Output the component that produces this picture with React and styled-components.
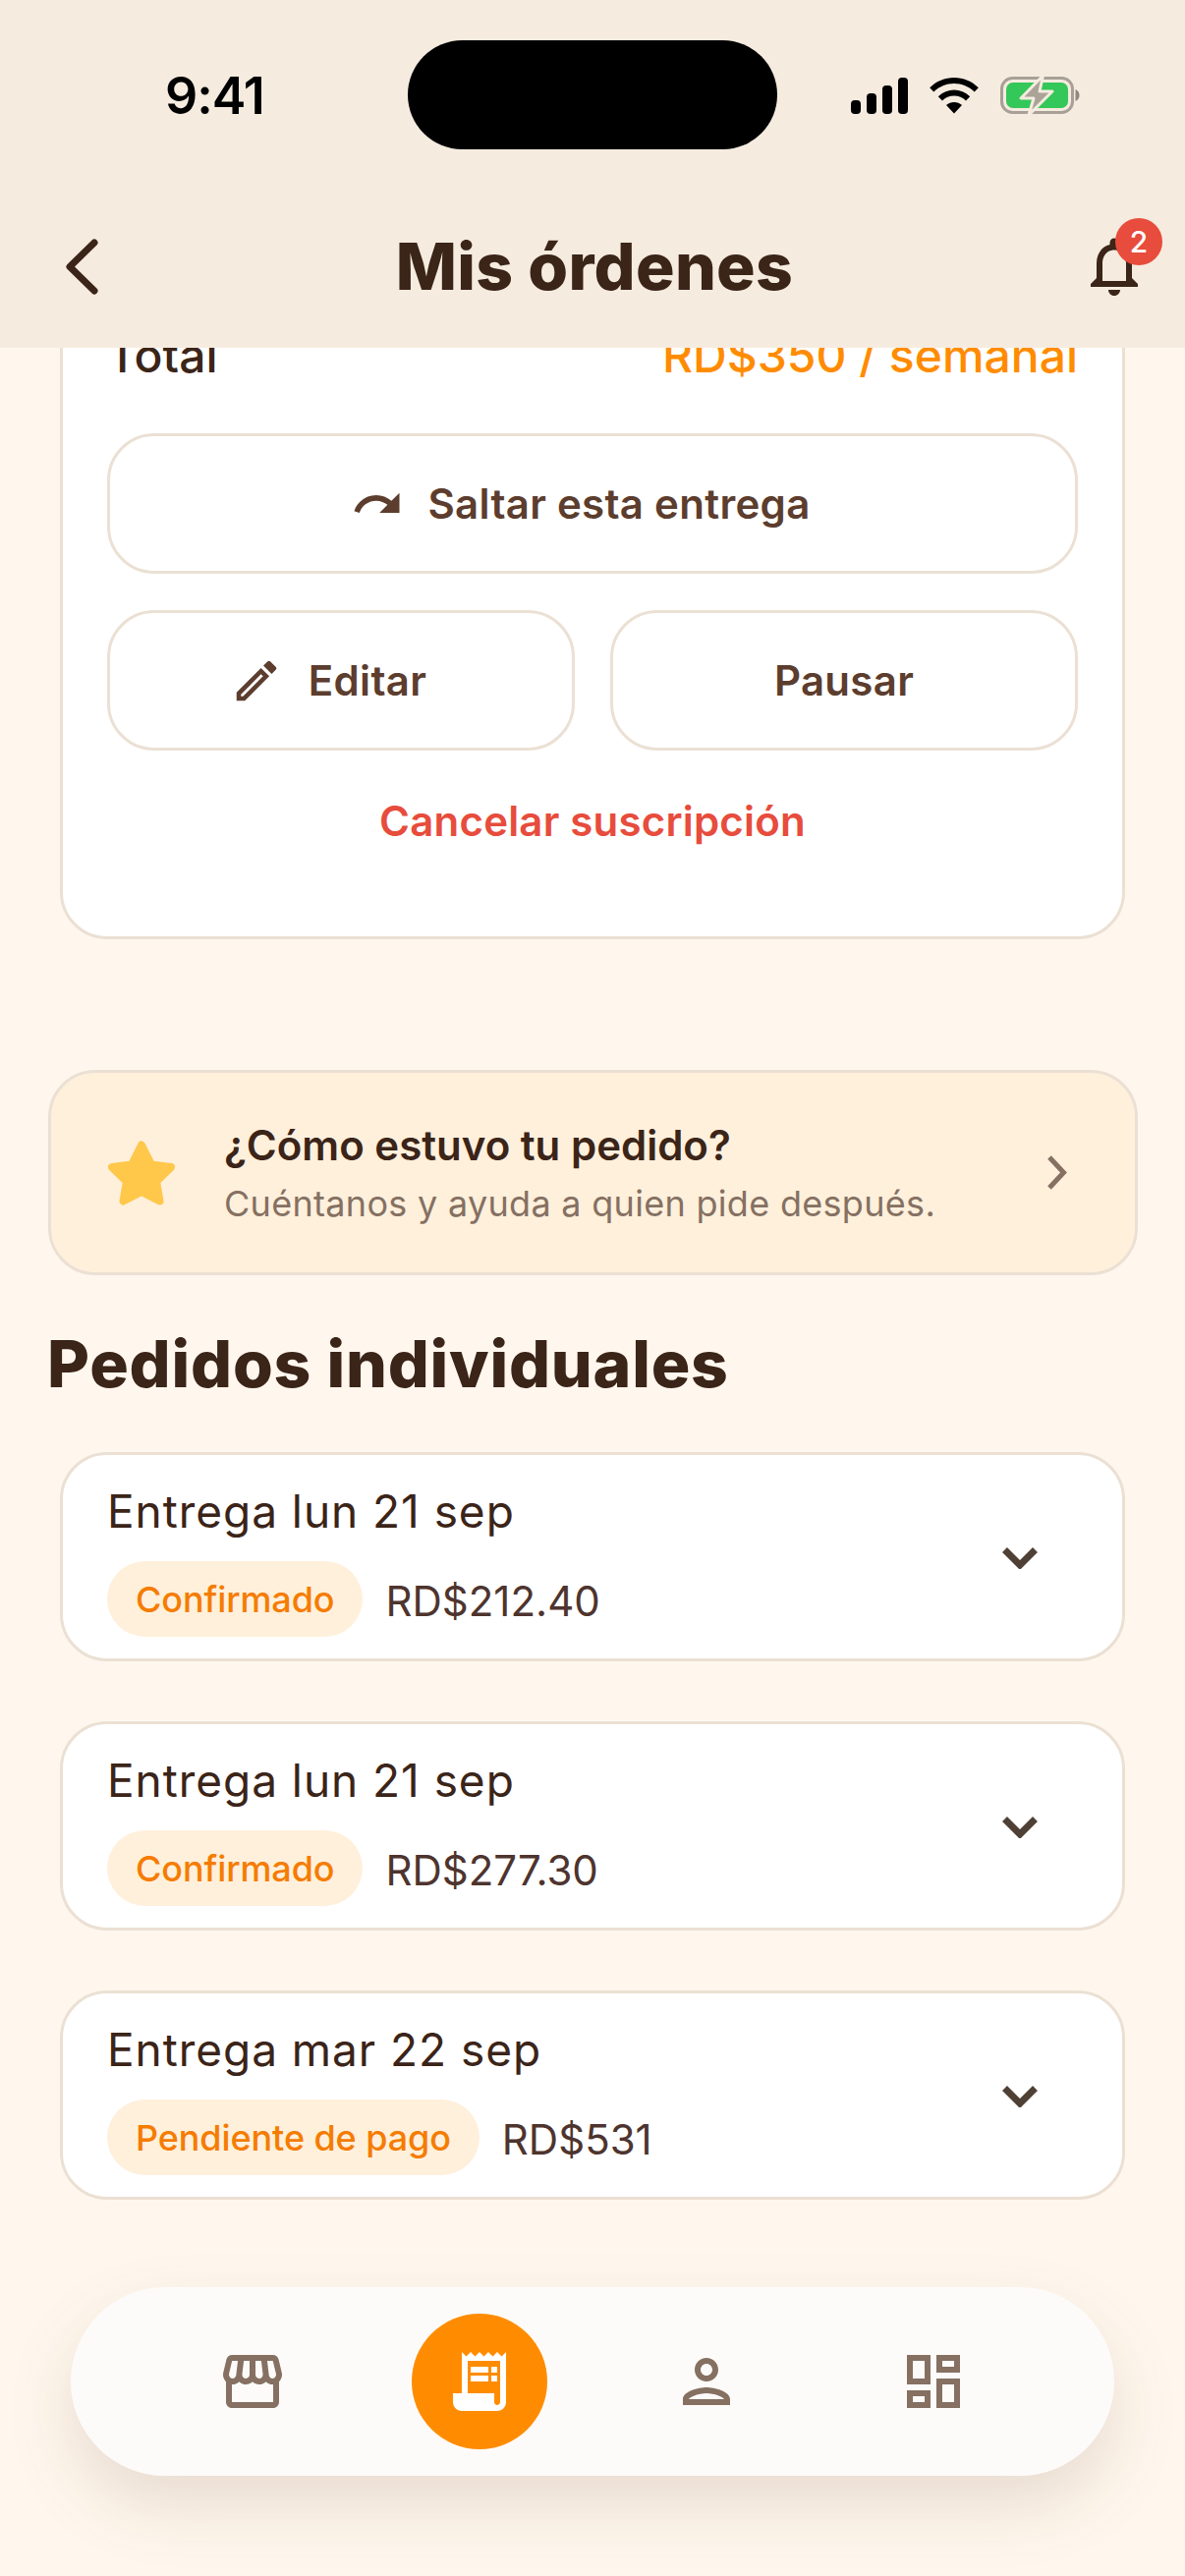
import React from "react";
import styled, { createGlobalStyle } from "styled-components";
import {
  MdOutlineStorefront,
  MdReceiptLong,
  MdOutlinePerson,
  MdOutlineDashboard,
  MdRedo,
  MdOutlineEdit,
  MdOutlineNotifications,
} from "react-icons/md";

const GlobalStyle = createGlobalStyle`
  html, body {
    margin: 0;
    padding: 0;
    background: #fff7ee;
  }
  * {
    box-sizing: border-box;
  }
`;

const Screen = styled.div`
  position: relative;
  width: 1206px;
  height: 2622px;
  overflow: hidden;
  display: flex;
  flex-direction: column;
  background: #fff7ee;
  font-family: Inter, "Liberation Sans", sans-serif;
  color: #3b2418;
`;

const Header = styled.header`
  position: relative;
  z-index: 2;
  flex: 0 0 354px;
  background: #f5ebdf;
  display: flex;
  flex-direction: column;
`;

const StatusBar = styled.div`
  height: 194px;
  padding: 41px 106px 0 168px;
  display: flex;
`;

const Time = styled.div`
  width: 247px;
  margin-top: 32px;
  font-size: 52px;
  line-height: 50px;
  font-weight: 600;
  color: #000;
  letter-spacing: -1px;
`;

const Island = styled.div`
  width: 376px;
  height: 111px;
  border-radius: 56px;
  background: #000;
`;

const StatusIcons = styled.div`
  display: flex;
  align-items: center;
  gap: 22px;
  height: 40px;
  margin: 36px 0 0 auto;
`;

const TitleBar = styled.div`
  display: flex;
  align-items: center;
  justify-content: space-between;
  height: 154px;
  padding: 0 48px 0 67px;
`;

const Title = styled.h1`
  margin: 0;
  font-size: 66px;
  line-height: 80px;
  font-weight: 800;
  letter-spacing: 0.3px;
  color: #3b2418;
`;

const BellWrap = styled.div`
  position: relative;
  width: 48px;
  height: 72px;
  display: flex;
  justify-content: center;
  color: #3b2418;
  svg {
    flex: none;
  }
`;

const Badge = styled.span`
  position: absolute;
  top: -13px;
  left: 25px;
  width: 48px;
  height: 48px;
  border-radius: 50%;
  background: #e74c3c;
  color: #fff;
  font-size: 30px;
  font-weight: 500;
  line-height: 48px;
  text-align: center;
`;

const Content = styled.main`
  flex: 1;
  overflow: hidden;
`;

const Card = styled.section`
  margin: -60px 61px 0;
  padding: 37px 45px 89px;
  background: #fff;
  border: 3px solid #ebe0d3;
  border-radius: 48px;
`;

const TotalRow = styled.div`
  display: flex;
  justify-content: space-between;
  height: 56px;
  margin-bottom: 51px;
  font-size: 48px;
  line-height: 56px;
  font-weight: 500;
`;

const TotalValue = styled.span`
  color: #ff8c00;
`;

const ActionRow = styled.div`
  display: grid;
  grid-auto-flow: column;
  grid-auto-columns: 1fr;
  gap: 36px;
  margin-bottom: 37px;
`;

const ActionButton = styled.button`
  height: 143px;
  padding: 0 ${(p) => p.$pad || 0}px 0 0;
  display: flex;
  align-items: center;
  justify-content: center;
  gap: ${(p) => p.$gap || 0}px;
  background: #fff;
  border: 3px solid #ebe0d3;
  border-radius: 48px;
  font-family: inherit;
  font-size: 42px;
  font-weight: 600;
  letter-spacing: 0.3px;
  color: #5c3d2e;
`;

const CancelLink = styled.div`
  margin-top: 44px;
  text-align: center;
  font-size: 42px;
  line-height: 56px;
  font-weight: 600;
  letter-spacing: 0.2px;
  color: #e74c3c;
`;

const Promo = styled.div`
  margin: 133px 48px 0 49px;
  height: 209px;
  padding: 0 68px 0 58px;
  display: flex;
  align-items: center;
  background: #fff0dc;
  border: 3px solid #ebe0d3;
  border-radius: 48px;
`;

const PromoText = styled.div`
  flex: 1;
  margin-left: 50px;
`;

const PromoTitle = styled.div`
  font-size: 42px;
  line-height: 56px;
  font-weight: 600;
  color: #3b2418;
`;

const PromoSub = styled.div`
  margin-top: 6px;
  font-size: 36px;
  line-height: 50px;
  letter-spacing: 0.3px;
  color: #857062;
`;

const SectionTitle = styled.h2`
  margin: 50px 0 0 48px;
  font-size: 66px;
  line-height: 80px;
  font-weight: 800;
  letter-spacing: 0.8px;
  color: #3b2418;
`;

const OrderList = styled.div`
  display: flex;
  flex-direction: column;
  gap: 61px;
  margin: 50px 61px 0;
`;

const OrderCard = styled.article`
  height: 213px;
  padding: 0 86px 0 45px;
  display: flex;
  align-items: center;
  justify-content: space-between;
  background: #fff;
  border: 3px solid #ebe0d3;
  border-radius: 48px;
`;

const OrderInfo = styled.div`
  align-self: flex-start;
  padding-top: 27px;
`;

const OrderTitle = styled.div`
  font-size: 46px;
  line-height: 60px;
  letter-spacing: 0.95px;
`;

const OrderMeta = styled.div`
  display: flex;
  align-items: center;
  gap: 23px;
  margin-top: 21px;
`;

const Pill = styled.span`
  height: 77px;
  padding: 0 29px;
  display: flex;
  align-items: center;
  border-radius: 39px;
  background: #fff0dc;
  color: #f57c00;
  font-size: 36px;
  font-weight: 500;
  letter-spacing: -0.1px;
`;

const Price = styled.span`
  margin-top: 3px;
  font-size: 42px;
  color: #4e342e;
`;

const DownSlot = styled.div`
  margin-top: 3px;
  display: flex;
`;

const BottomNav = styled.nav`
  position: absolute;
  left: 72px;
  bottom: 102px;
  width: 1062px;
  height: 192px;
  padding: 0 69px;
  display: grid;
  grid-template-columns: repeat(4, 1fr);
  align-items: center;
  justify-items: center;
  background: #fdfbf9;
  border-radius: 96px;
  box-shadow: 0 30px 70px rgba(90, 60, 25, 0.14);
  color: #857062;
`;

const NavActive = styled.div`
  width: 138px;
  height: 138px;
  border-radius: 50%;
  background: #ff8c00;
  color: #fff;
  display: flex;
  align-items: center;
  justify-content: center;
`;

const BackIcon = () => (
  <svg width="33" height="57" viewBox="0 0 33 57" fill="none" stroke="#3b2418" strokeWidth="7" strokeLinecap="round" strokeLinejoin="round">
    <path d="M29 4 L4 28.500 L29 53" />
  </svg>
);

const RightIcon = () => (
  <svg width="22" height="35" viewBox="0 0 22 35" fill="none" stroke="#857062" strokeWidth="5">
    <path d="M3 2 L17.500 17.500 L3 33" />
  </svg>
);

const DownIcon = () => (
  <svg width="36" height="22" viewBox="0 0 36 22" fill="none" stroke="#4f4035" strokeWidth="7">
    <path d="M2.500 2.500 L18 18 L33.500 2.500" />
  </svg>
);

const SignalIcon = () => (
  <svg width="58" height="37" viewBox="0 0 58 37" fill="#000">
    <rect x="0" y="23" width="10" height="14" rx="4" />
    <rect x="16" y="16" width="10" height="21" rx="4" />
    <rect x="32" y="8" width="10" height="29" rx="4" />
    <rect x="48" y="0" width="10" height="37" rx="4" />
  </svg>
);

const WifiIcon = () => (
  <svg width="50" height="37" viewBox="0 0 50 37" fill="#000">
    <path d="M25 0C15.500 0 7 3.600 0.200 10.300L4.300 14.500C10 9 17 6 25 6S40 9 45.700 14.500L49.800 10.300C43 3.600 34.500 0 25 0Z" />
    <path d="M25 12.500C19 12.500 13.500 14.800 8.800 19.200L13 23.400C16.300 20.400 20.300 18.600 25 18.600S33.700 20.400 37 23.400L41.200 19.200C36.500 14.800 31 12.500 25 12.500Z" />
    <path d="M25 25C22 25 19.300 26 17 28L25 36.500L33 28C30.700 26 28 25 25 25Z" />
  </svg>
);

const BatteryIcon = () => (
  <svg width="82" height="40" viewBox="0 0 82 40" fill="none">
    <rect x="1.500" y="2.500" width="72" height="35" rx="11" stroke="#a8a097" strokeWidth="3" />
    <path d="M76.500 14C79 15 80.500 17.300 80.500 20S79 25 76.500 26Z" fill="#8f8880" />
    <rect x="6" y="7" width="63" height="26" rx="7" fill="#34c759" />
    <path d="M43.500 0L21 23H34L29 40L53 16H40Z" fill="#aba298" stroke="#f5ebdf" strokeWidth="3" strokeLinejoin="round" />
  </svg>
);

const StarIcon = () => (
  <svg width="68" height="66" viewBox="0 0 68 66" fill="#ffc84a" stroke="#ffc84a" strokeWidth="8" strokeLinejoin="round">
    <path d="M34 4.500 L44 24.500 L64 27 L49 41.500 L52.500 61.500 L34 52 L15.500 61.500 L19 41.500 L4 27 L24 24.500 Z" />
  </svg>
);

const orders = [
  { id: 1, date: "Entrega lun 21 sep", status: "Confirmado", price: "RD$212.40" },
  { id: 2, date: "Entrega lun 21 sep", status: "Confirmado", price: "RD$277.30" },
  { id: 3, date: "Entrega mar 22 sep", status: "Pendiente de pago", price: "RD$531" },
];

const App = () => {
  return (
    <Screen>
      <GlobalStyle />
      <Header>
        <StatusBar>
          <Time>9:41</Time>
          <Island />
          <StatusIcons>
            <SignalIcon />
            <WifiIcon />
            <BatteryIcon />
          </StatusIcons>
        </StatusBar>
        <TitleBar>
          <BackIcon />
          <Title>Mis órdenes</Title>
          <BellWrap>
            <MdOutlineNotifications size={72} />
            <Badge>2</Badge>
          </BellWrap>
        </TitleBar>
      </Header>
      <Content>
        <Card>
          <TotalRow>
            <span>Total</span>
            <TotalValue>RD$350 / semanal</TotalValue>
          </TotalRow>
          <ActionRow>
            <ActionButton $gap={24} $pad={24}>
              <MdRedo size={54} />
              Saltar esta entrega
            </ActionButton>
          </ActionRow>
          <ActionRow>
            <ActionButton $gap={26} $pad={26}>
              <MdOutlineEdit size={54} />
              Editar
            </ActionButton>
            <ActionButton>Pausar</ActionButton>
          </ActionRow>
          <CancelLink>Cancelar suscripción</CancelLink>
        </Card>
        <Promo>
          <StarIcon />
          <PromoText>
            <PromoTitle>¿Cómo estuvo tu pedido?</PromoTitle>
            <PromoSub>Cuéntanos y ayuda a quien pide después.</PromoSub>
          </PromoText>
          <RightIcon />
        </Promo>
        <SectionTitle>Pedidos individuales</SectionTitle>
        <OrderList>
          {orders.map((o) => (
            <OrderCard key={o.id}>
              <OrderInfo>
                <OrderTitle>{o.date}</OrderTitle>
                <OrderMeta>
                  <Pill>{o.status}</Pill>
                  <Price>{o.price}</Price>
                </OrderMeta>
              </OrderInfo>
              <DownSlot>
                <DownIcon />
              </DownSlot>
            </OrderCard>
          ))}
        </OrderList>
      </Content>
      <BottomNav>
        <MdOutlineStorefront size={72} />
        <NavActive>
          <MdReceiptLong size={72} />
        </NavActive>
        <MdOutlinePerson size={72} />
        <MdOutlineDashboard size={72} />
      </BottomNav>
    </Screen>
  );
};

export default App;
